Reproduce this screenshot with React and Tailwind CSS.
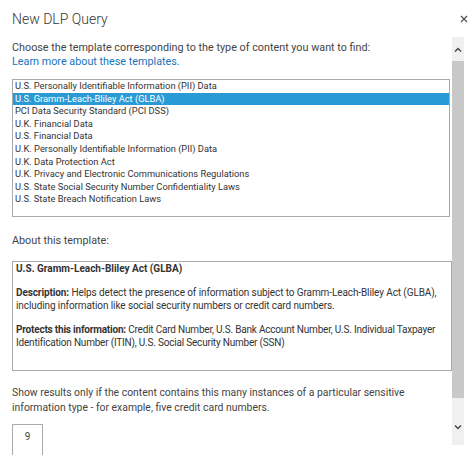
const templates = [
  "U.S. Personally Identifiable Information (PII) Data",
  "U.S. Gramm-Leach-Bliley Act (GLBA)",
  "PCI Data Security Standard (PCI DSS)",
  "U.K. Financial Data",
  "U.S. Financial Data",
  "U.K. Personally Identifiable Information (PII) Data",
  "U.K. Data Protection Act",
  "U.K. Privacy and Electronic Communications Regulations",
  "U.S. State Social Security Number Confidentiality Laws",
  "U.S. State Breach Notification Laws",
];

export default function App() {
  const selected = 1;
  return (
    <div
      className="relative h-[455px] w-[474px] overflow-hidden bg-white text-[#444]"
      style={{ fontFamily: 'Roboto, "Open Sans", sans-serif' }}
    >
      {/* header */}
      <div className="flex items-start justify-between pl-[12px] pr-[6px] pt-[9px]">
        <h1 className="text-[14px] font-light leading-[20px] text-[#333]">New DLP Query</h1>
        <svg width="8" height="8" viewBox="0 0 8 8" className="mt-[6px]">
          <path d="M1 1 L7 7 M7 1 L1 7" stroke="#555" strokeWidth="1.3" />
        </svg>
      </div>

      <div className="flex">
        {/* body */}
        <div className="w-[452px] pl-[12px] pt-[12px]">
          <p className="text-[10.8px] leading-[14px]">
            Choose the template corresponding to the type of content you want to find:
          </p>
          <a className="block text-[10.8px] leading-[14px] text-[#1a73b8]">
            Learn more about these templates.
          </a>

          <ul className="mt-[10px] h-[138px] w-[438px] border border-[#aaa] text-[9.3px] leading-[12.6px] text-[#333]">
            {templates.map((t, i) => (
              <li
                key={t}
                className={`pl-[2px] ${i === selected ? "bg-[#2a9ad6] text-white" : ""}`}
              >
                {t}
              </li>
            ))}
          </ul>

          <p className="mt-[17px] text-[10.8px] leading-[14px]">About this template:</p>

          <div className="mt-[13px] h-[110px] w-[440px] overflow-hidden border border-[#aaa] px-[3px] text-[10px] leading-[13.5px] whitespace-nowrap text-[#333]">
            <p className="font-bold">U.S. Gramm-Leach-Bliley Act (GLBA)</p>
            <p className="mt-[10px] tracking-[-0.1px]">
              <span className="font-bold">Description:</span> Helps detect the presence of information
              subject to Gramm-Leach-Bliley Act (GLBA),
              <br />
              including information like social security numbers or credit card numbers.
            </p>
            <p className="mt-[10px] tracking-[-0.2px]">
              <span className="font-bold">Protects this information:</span> Credit Card Number, U.S.
              Bank Account Number, U.S. Individual Taxpayer
              <br />
              Identification Number (ITIN), U.S. Social Security Number (SSN)
            </p>
          </div>

          <p className="mt-[15px] text-[10.4px] leading-[14.5px]">
            Show results only if the content contains this many instances of a particular sensitive
            <br />
            information type - for example, five credit card numbers.
          </p>

          <div className="mt-[9px] flex h-[32px] w-[31px] justify-center border border-[#aaa] pt-[6px] text-[10px] leading-[12px]">
            9
          </div>
        </div>

        {/* scrollbar */}
        <div className="mt-[8px] flex h-[408px] w-[12px] flex-col bg-[#f0f0f0]">
          <div className="flex h-[24px] items-center justify-center">
            <svg width="8" height="5" viewBox="0 0 8 5">
              <path d="M1 4.5 L4 1.5 L7 4.5" stroke="#444" strokeWidth="1.4" fill="none" />
            </svg>
          </div>
          <div className="h-[337px] bg-[#c8c8c8]" />
          <div className="flex flex-1 items-center justify-center pt-[12px]">
            <svg width="8" height="5" viewBox="0 0 8 5">
              <path d="M1 0.5 L4 3.5 L7 0.5" stroke="#444" strokeWidth="1.4" fill="none" />
            </svg>
          </div>
        </div>
      </div>
    </div>
  );
}
